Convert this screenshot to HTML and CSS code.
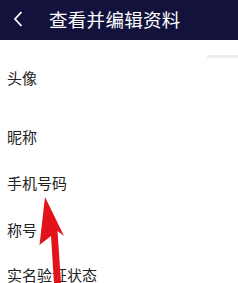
FILE: index.html
```html
<!doctype html>
<html>
<head>
<meta charset="utf-8">
<title>查看并编辑资料</title>
<link rel="stylesheet" href="styles.css">
</head>
<body>
<div class="page">
	<div class="topbar">
		<a href="javascript:;" class="back">
			<svg width="10" height="16" viewBox="0 0 10 16"><path d="M8.5 1 L2 8 L8.5 15" fill="none" stroke="#fff" stroke-width="1.8"/></svg>
		</a>
		<h4>查看并编辑资料</h4>
	</div>
	<span class="shade"></span>
	<ul class="info">
		<li class="r1">头像</li>
		<li class="r2">昵称</li>
		<li class="r3">手机号码</li>
		<li class="r4">称号</li>
		<li class="r5">实名验证状态</li>
	</ul>
	<svg class="arrow" width="238" height="283" viewBox="0 0 238 283">
		<polygon points="45,197 64,236 57.5,231 61,283 54,283 51,236 39.5,245" fill="#e3131b"/>
	</svg>
</div>
</body>
</html>
```

FILE: styles.css
```css
*{margin:0;padding:0}
body{background:#fff; font-family:"Noto Sans CJK SC","Noto Sans",sans-serif; overflow:hidden}
.page{width:238px;height:283px; position:relative; overflow:hidden}
.topbar{height:40px; background:#13123d; display:flex; align-items:center}
.topbar .back{display:flex; width:12px; margin-left:13px; margin-top:-2px}
.topbar h4{color:#fff; font-size:18.5px; font-weight:normal; margin-left:24px; margin-top:-3px; letter-spacing:0.3px}
.shade{position:absolute; top:55px; left:207px; width:31px; height:3px; background:#ececec}
.info li{list-style:none; display:flex; align-items:center; padding-left:7px; font-size:15px; color:#222}
.info .r1{height:74px}
.info .r2{height:44px}
.info .r3{height:48px}
.info .r4{height:46px}
.info .r5{height:44px}
.arrow{position:absolute; top:0; left:0}
```
